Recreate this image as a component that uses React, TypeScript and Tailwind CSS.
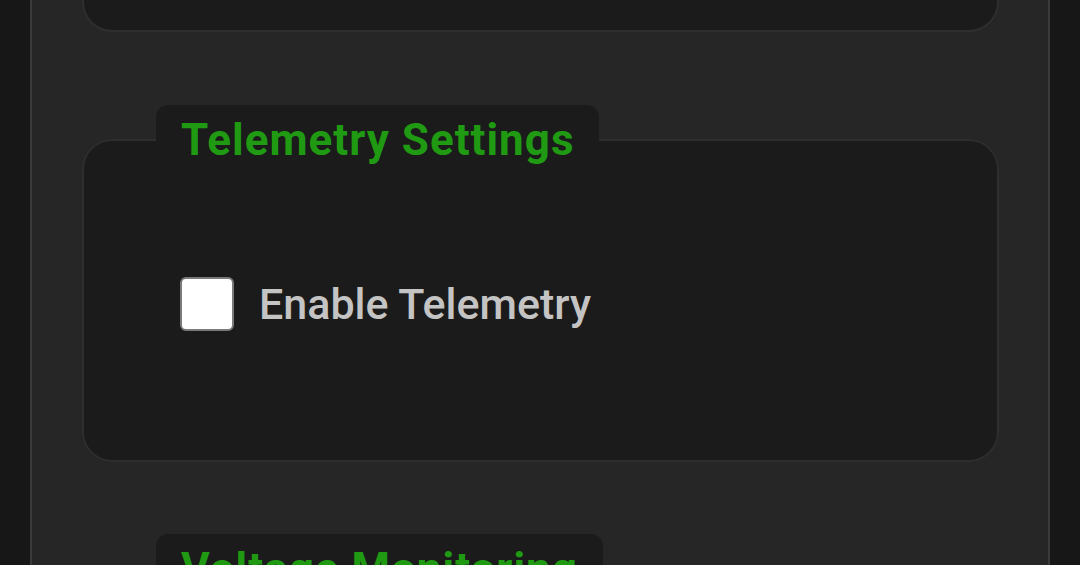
export default function App() {
  return (
    <div className="min-h-screen bg-[#171717]" style={{ fontFamily: "Roboto, 'Liberation Sans', sans-serif" }}>
      <div className="mx-auto w-[1020px] min-h-screen border-x-2 border-[#3a3a3a] bg-[#262626] pl-[50px] pr-[49px]">
        <div className="h-[32px] rounded-b-[30px] border-x-2 border-b-2 border-[#2e2e2e] bg-[#1b1b1b]" />

        <fieldset className="mt-[73px] rounded-[30px] border-2 border-[#2e2e2e] bg-[#1b1b1b]">
          <legend className="ml-[72px] rounded-t-xl bg-[#1b1b1b] px-[25px] py-[12px] text-[44px] font-bold leading-[46px] tracking-[1px] text-[#1f9a12]">
            Telemetry Settings
          </legend>
          <div className="pl-[96px] pt-[102px] pb-[129px]">
            <label className="flex items-center gap-[25px]">
              <input type="checkbox" className="h-[54px] w-[54px] appearance-none rounded-[6px] border-2 border-[#7a7a7a] bg-white" />
              <span className="text-[43px] font-medium leading-[54px] text-[#c4c4c4]">Enable Telemetry</span>
            </label>
          </div>
        </fieldset>

        <fieldset className="mt-[72px] rounded-[30px] border-2 border-[#2e2e2e] bg-[#1b1b1b]">
          <legend className="ml-[72px] rounded-t-xl bg-[#1b1b1b] px-[25px] py-[12px] text-[44px] font-bold leading-[46px] tracking-[1px] text-[#1f9a12]">
            Voltage Monitoring
          </legend>
          <div className="h-[200px]" />
        </fieldset>
      </div>
    </div>
  )
}
